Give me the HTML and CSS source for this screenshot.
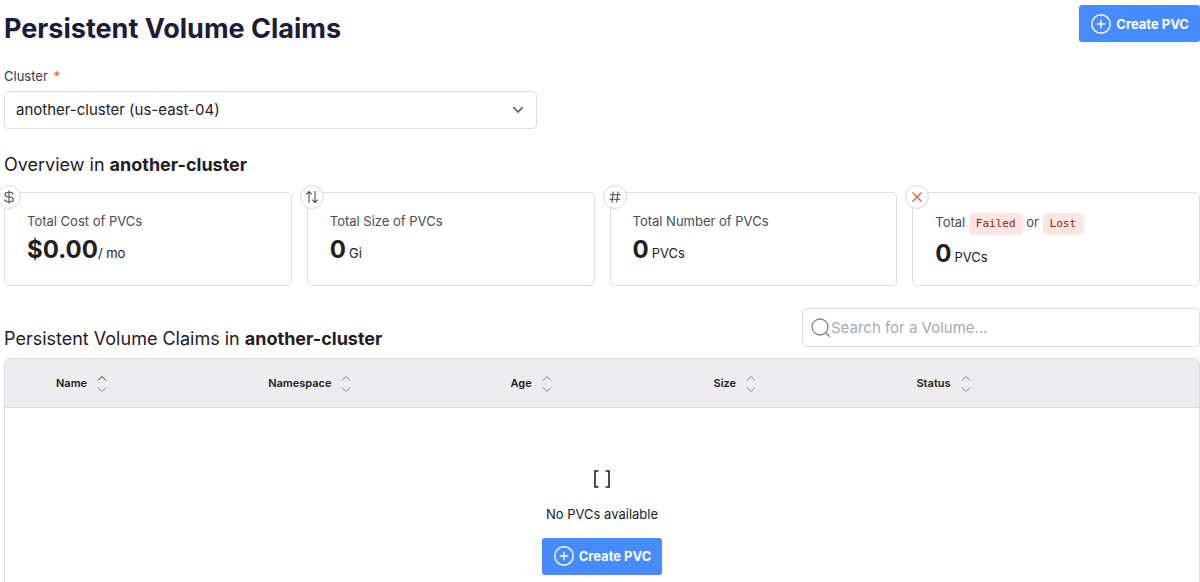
FILE: index.html
```
<!DOCTYPE html>
<html lang="en">
<head>
<meta charset="utf-8">
<meta name="viewport" content="width=device-width, initial-scale=1">
<title>Persistent Volume Claims</title>
<link rel="stylesheet" href="styles.css">
</head>
<body>
<svg class="symbols" aria-hidden="true">
  <symbol id="plus" viewBox="0 0 20 20"><circle cx="10" cy="10" r="9.2"/><path d="M10 5.8v8.4M5.8 10h8.4"/></symbol>
  <symbol id="sort" viewBox="0 0 10 18"><path d="M1 5.5 5 1.5 9 5.5"/><path d="M1 12.5 5 16.5 9 12.5"/></symbol>
</svg>
<main class="page">
  <header class="page-head">
    <h1 class="title">Persistent Volume Claims</h1>
    <button class="btn" type="button"><svg class="btn-icon" aria-hidden="true"><use href="#plus"/></svg>Create PVC</button>
  </header>

  <div class="field">
    <label class="label" for="cluster">Cluster <span class="required">*</span></label>
    <div class="select-wrap">
      <select class="select" id="cluster"><option>another-cluster (us-east-04)</option></select>
      <svg class="chevron" viewBox="0 0 12 8" aria-hidden="true"><path d="M1.2 1.2 6 6l4.800-4.800"/></svg>
    </div>
  </div>

  <h2 class="overview">Overview in <strong>another-cluster</strong></h2>

  <section class="cards">
    <article class="card">
      <span class="badge"><svg viewBox="0 0 14 14" aria-hidden="true"><path d="M7 .5v13M11 4.300C10.800 3 9.600 2.200 8 2.200H6C4.300 2.200 3 3.200 3 4.600S4.200 7 6 7h2c1.900 0 3.200 1 3.200 2.400S9.900 11.800 8 11.800H6c-1.800 0-3.100-.9-3.300-2.300"/></svg></span>
      <p class="card-label">Total Cost of PVCs</p>
      <p class="value"><b class="number">$0.00</b><span class="unit">/ mo</span></p>
    </article>
    <article class="card">
      <span class="badge"><svg viewBox="0 0 14 14" aria-hidden="true"><path d="M4 13V1.500M1.200 4.300 4 1.500l2.800 2.800M10 1v11.500M7.200 9.700l2.800 2.800 2.800-2.800"/></svg></span>
      <p class="card-label">Total Size of PVCs</p>
      <p class="value"><b class="number">0</b><span class="unit gap">Gi</span></p>
    </article>
    <article class="card">
      <span class="badge"><svg viewBox="0 0 14 14" aria-hidden="true"><path d="M5.300 1.500 3.900 12.500M10.100 1.500 8.700 12.500M1.800 4.800h10.800M1.400 9.300h10.800"/></svg></span>
      <p class="card-label">Total Number of PVCs</p>
      <p class="value"><b class="number">0</b><span class="unit gap">PVCs</span></p>
    </article>
    <article class="card">
      <span class="badge danger"><svg viewBox="0 0 14 14" aria-hidden="true"><path d="M2.500 2.500l9 9M11.500 2.500l-9 9"/></svg></span>
      <p class="card-label tagged">Total <code class="tag">Failed</code> or <code class="tag">Lost</code></p>
      <p class="value"><b class="number">0</b><span class="unit gap">PVCs</span></p>
    </article>
  </section>

  <div class="list-head">
    <h2 class="list-title">Persistent Volume Claims in <strong>another-cluster</strong></h2>
    <label class="search">
      <svg class="search-icon" viewBox="0 0 20 20" aria-hidden="true"><circle cx="9" cy="9" r="8"/><path d="m14.800 14.800 4 4"/></svg>
      <input class="search-input" type="search" placeholder="Search for a Volume..." aria-label="Search for a Volume">
    </label>
  </div>

  <div class="table-box">
    <table class="table">
      <colgroup><col class="c-name"><col class="c-space"><col class="c-age"><col class="c-size"><col></colgroup>
      <thead>
        <tr>
          <th class="first">Name<svg class="sort" viewBox="0 0 10 18" aria-hidden="true"><path class="active" d="M1 5.500 5 1.500 9 5.500"/><path d="M1 12.500 5 16.500 9 12.500"/></svg></th>
          <th>Namespace<svg class="sort" aria-hidden="true"><use href="#sort"/></svg></th>
          <th>Age<svg class="sort" aria-hidden="true"><use href="#sort"/></svg></th>
          <th>Size<svg class="sort" aria-hidden="true"><use href="#sort"/></svg></th>
          <th>Status<svg class="sort" aria-hidden="true"><use href="#sort"/></svg></th>
        </tr>
      </thead>
      <tbody>
        <tr>
          <td colspan="5">
            <div class="empty">
              <svg class="brackets" viewBox="0 0 16 18" aria-hidden="true"><path d="M4.500 1H1v16h3.500M11.500 1H15v16h-3.500"/></svg>
              <p class="empty-text">No PVCs available</p>
              <button class="btn" type="button"><svg class="btn-icon" aria-hidden="true"><use href="#plus"/></svg>Create PVC</button>
            </div>
          </td>
        </tr>
      </tbody>
    </table>
  </div>
</main>
</body>
</html>
```
FILE: styles.css
```
* { box-sizing: border-box; }
body {
  margin: 0;
  background: #fff;
  color: #1f2024;
  font-family: Inter, "Liberation Sans", sans-serif;
  font-size: 14px;
  line-height: 20px;
}
h1, h2, p { margin: 0; }
svg { fill: none; stroke: currentColor; }
.symbols { position: absolute; width: 0; height: 0; }
.page { padding: 5px 0 0 4px; }

.page-head { display: flex; justify-content: space-between; align-items: flex-start; }
.title { font-size: 27px; line-height: 48px; font-weight: 700; color: #1b1b3a; }
.btn {
  display: inline-flex;
  align-items: center;
  gap: 5px;
  height: 37px;
  padding: 0 11px 0 12px;
  border: 0;
  border-radius: 3px;
  background: #468bff;
  color: #fff;
  font: 700 13px/20px Inter, "Liberation Sans", sans-serif;
  white-space: nowrap;
}
.btn-icon { width: 20px; height: 20px; stroke-width: 1.4; }

.field { max-width: 533px; margin-top: 13px; }
.label { display: block; font-size: 13px; line-height: 20px; color: #3b3b47; }
.required { color: #f4512c; margin-left: 2px; }
.select-wrap { position: relative; margin-top: 5px; }
.select {
  appearance: none;
  display: block;
  width: 100%;
  height: 38px;
  padding: 0 36px 0 11px;
  border: 1px solid #dddde3;
  border-radius: 4px;
  background: #fff;
  color: #1f2024;
  font: 15px/20px Inter, "Liberation Sans", sans-serif;
}
.chevron { position: absolute; right: 13px; top: 15px; width: 12px; height: 8px; color: #6b6880; stroke-width: 1.8; pointer-events: none; }

.overview { margin-top: 24px; font-size: 18px; line-height: 24px; font-weight: 400; }
.overview strong, .list-title strong { font-weight: 700; }

.cards { display: grid; grid-template-columns: repeat(4, 1fr); gap: 15px; margin-top: 15px; }
.card { position: relative; padding: 18px 22px 9px; border: 1px solid #dddde1; border-radius: 5px; }
.badge {
  position: absolute;
  left: -8px;
  top: -8px;
  display: grid;
  place-items: center;
  width: 24px;
  height: 24px;
  border: 1px solid #d8d8dd;
  border-radius: 50%;
  background: #fff;
  color: #4b4b57;
}
.badge svg { width: 14px; height: 14px; stroke-width: 1.1; }
.danger { color: #e8533a; }
.card-label { font-size: 13px; line-height: 20px; color: #4b4b57; }
.tagged { line-height: 22px; }
.tag {
  display: inline-block;
  padding: 0 7px;
  border-radius: 5px;
  background: #ffe4e0;
  color: #8c2318;
  font: 11px/22px "DejaVu Sans Mono", monospace;
}
.value { line-height: 38px; }
.number { font-size: 24px; font-weight: 700; }
.unit { font-size: 13px; }
.gap { margin-left: 3px; }

.list-head { display: flex; justify-content: space-between; align-items: flex-end; margin-top: 22px; }
.list-title { padding-bottom: 7px; font-size: 18px; line-height: 24px; font-weight: 400; }
.search {
  display: flex;
  align-items: center;
  width: 398px;
  height: 39px;
  margin-bottom: 11px;
  padding: 0 8px;
  border: 1px solid #dddde3;
  border-radius: 4px;
}
.search-icon { flex: none; width: 20px; height: 20px; color: #85839a; stroke-width: 1.3; }
.search-input { flex: 1; min-width: 0; padding: 0; border: 0; outline: 0; background: none; font: 15px/20px Inter, "Liberation Sans", sans-serif; }
.search-input::placeholder { color: #aaa9b7; opacity: 1; }

.table-box { border: 1px solid #dddde3; border-radius: 5px 5px 0 0; overflow: hidden; }
.table { width: 100%; border-collapse: collapse; table-layout: fixed; }
.c-name { width: 20.7%; }
.c-space { width: 20.3%; }
.c-age, .c-size { width: 17%; }
th {
  height: 48px;
  padding: 0 16px;
  border-bottom: 1px solid #dddde3;
  background: #ededef;
  font-size: 11px;
  font-weight: 600;
  text-align: left;
  white-space: nowrap;
}
.first { padding-left: 51px; }
.sort { width: 10px; height: 18px; margin-left: 10px; vertical-align: middle; color: #85858d; stroke-width: 1; }
.active { stroke: #333; }
td { padding: 0; }
.empty { display: flex; flex-direction: column; align-items: center; padding: 62px 0 7px; }
.brackets { width: 16px; height: 18px; stroke-width: 1.6; }
.empty-text { margin: 16px 0 14px; font-size: 13px; line-height: 20px; }
```
